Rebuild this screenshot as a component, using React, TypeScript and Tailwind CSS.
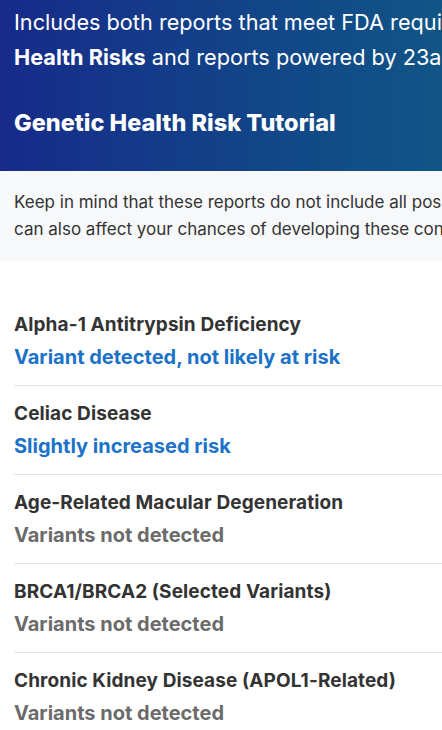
import React from "react";

const font = { fontFamily: "Inter, 'Noto Sans', sans-serif" };

const reports = [
  { name: "Alpha-1 Antitrypsin Deficiency", result: "Variant detected, not likely at risk", found: true },
  { name: "Celiac Disease", result: "Slightly increased risk", found: true },
  { name: "Age-Related Macular Degeneration", result: "Variants not detected", found: false },
  { name: "BRCA1/BRCA2 (Selected Variants)", result: "Variants not detected", found: false },
  { name: "Chronic Kidney Disease (APOL1-Related)", result: "Variants not detected", found: false },
  { name: "Familial Hypercholesterolemia", result: "Variants not detected", found: false },
];

export default function App() {
  return (
    <div className="h-[730px] w-[442px] overflow-hidden bg-white" style={font}>
      <div className="bg-gradient-to-r from-[#172a8a] to-[#115586] px-[14px] pb-[33px] pt-[5px] text-white">
        <p className="whitespace-nowrap text-[21.7px] leading-[35px]">
          Includes both reports that meet FDA requirements for Genetic
          <br />
          <b className="font-bold">Health Risks</b> and reports powered by 23andMe Research.
        </p>
        <h2 className="mt-[32px] whitespace-nowrap text-[23.5px] font-extrabold leading-[31px]">
          Genetic Health Risk Tutorial
        </h2>
      </div>
      <div className="bg-[#f7f8fa] px-[14px] py-[18px] text-[17px] leading-[27px] text-[#333]">
        <p className="whitespace-nowrap">
          Keep in mind that these reports do not include all possible genetic variants for these conditions. Other factors
          <br />
          can also affect your chances of developing these conditions.
        </p>
      </div>
      <ul className="pl-[14px] pt-[48px]">
        {reports.map((r) => (
          <li key={r.name} className="border-b border-[#e3e3e3] pb-[12px] pt-[12px] first:pt-0">
            <div className="whitespace-nowrap text-[19px] font-bold leading-[32px] tracking-[0.1px] text-[#333]">{r.name}</div>
            <div
              className={
                "whitespace-nowrap text-[20px] font-bold leading-[32px] " +
                (r.found ? "text-[#1b72c7]" : "text-[#6b6b6b]")
              }
            >
              {r.result}
            </div>
          </li>
        ))}
      </ul>
    </div>
  );
}
